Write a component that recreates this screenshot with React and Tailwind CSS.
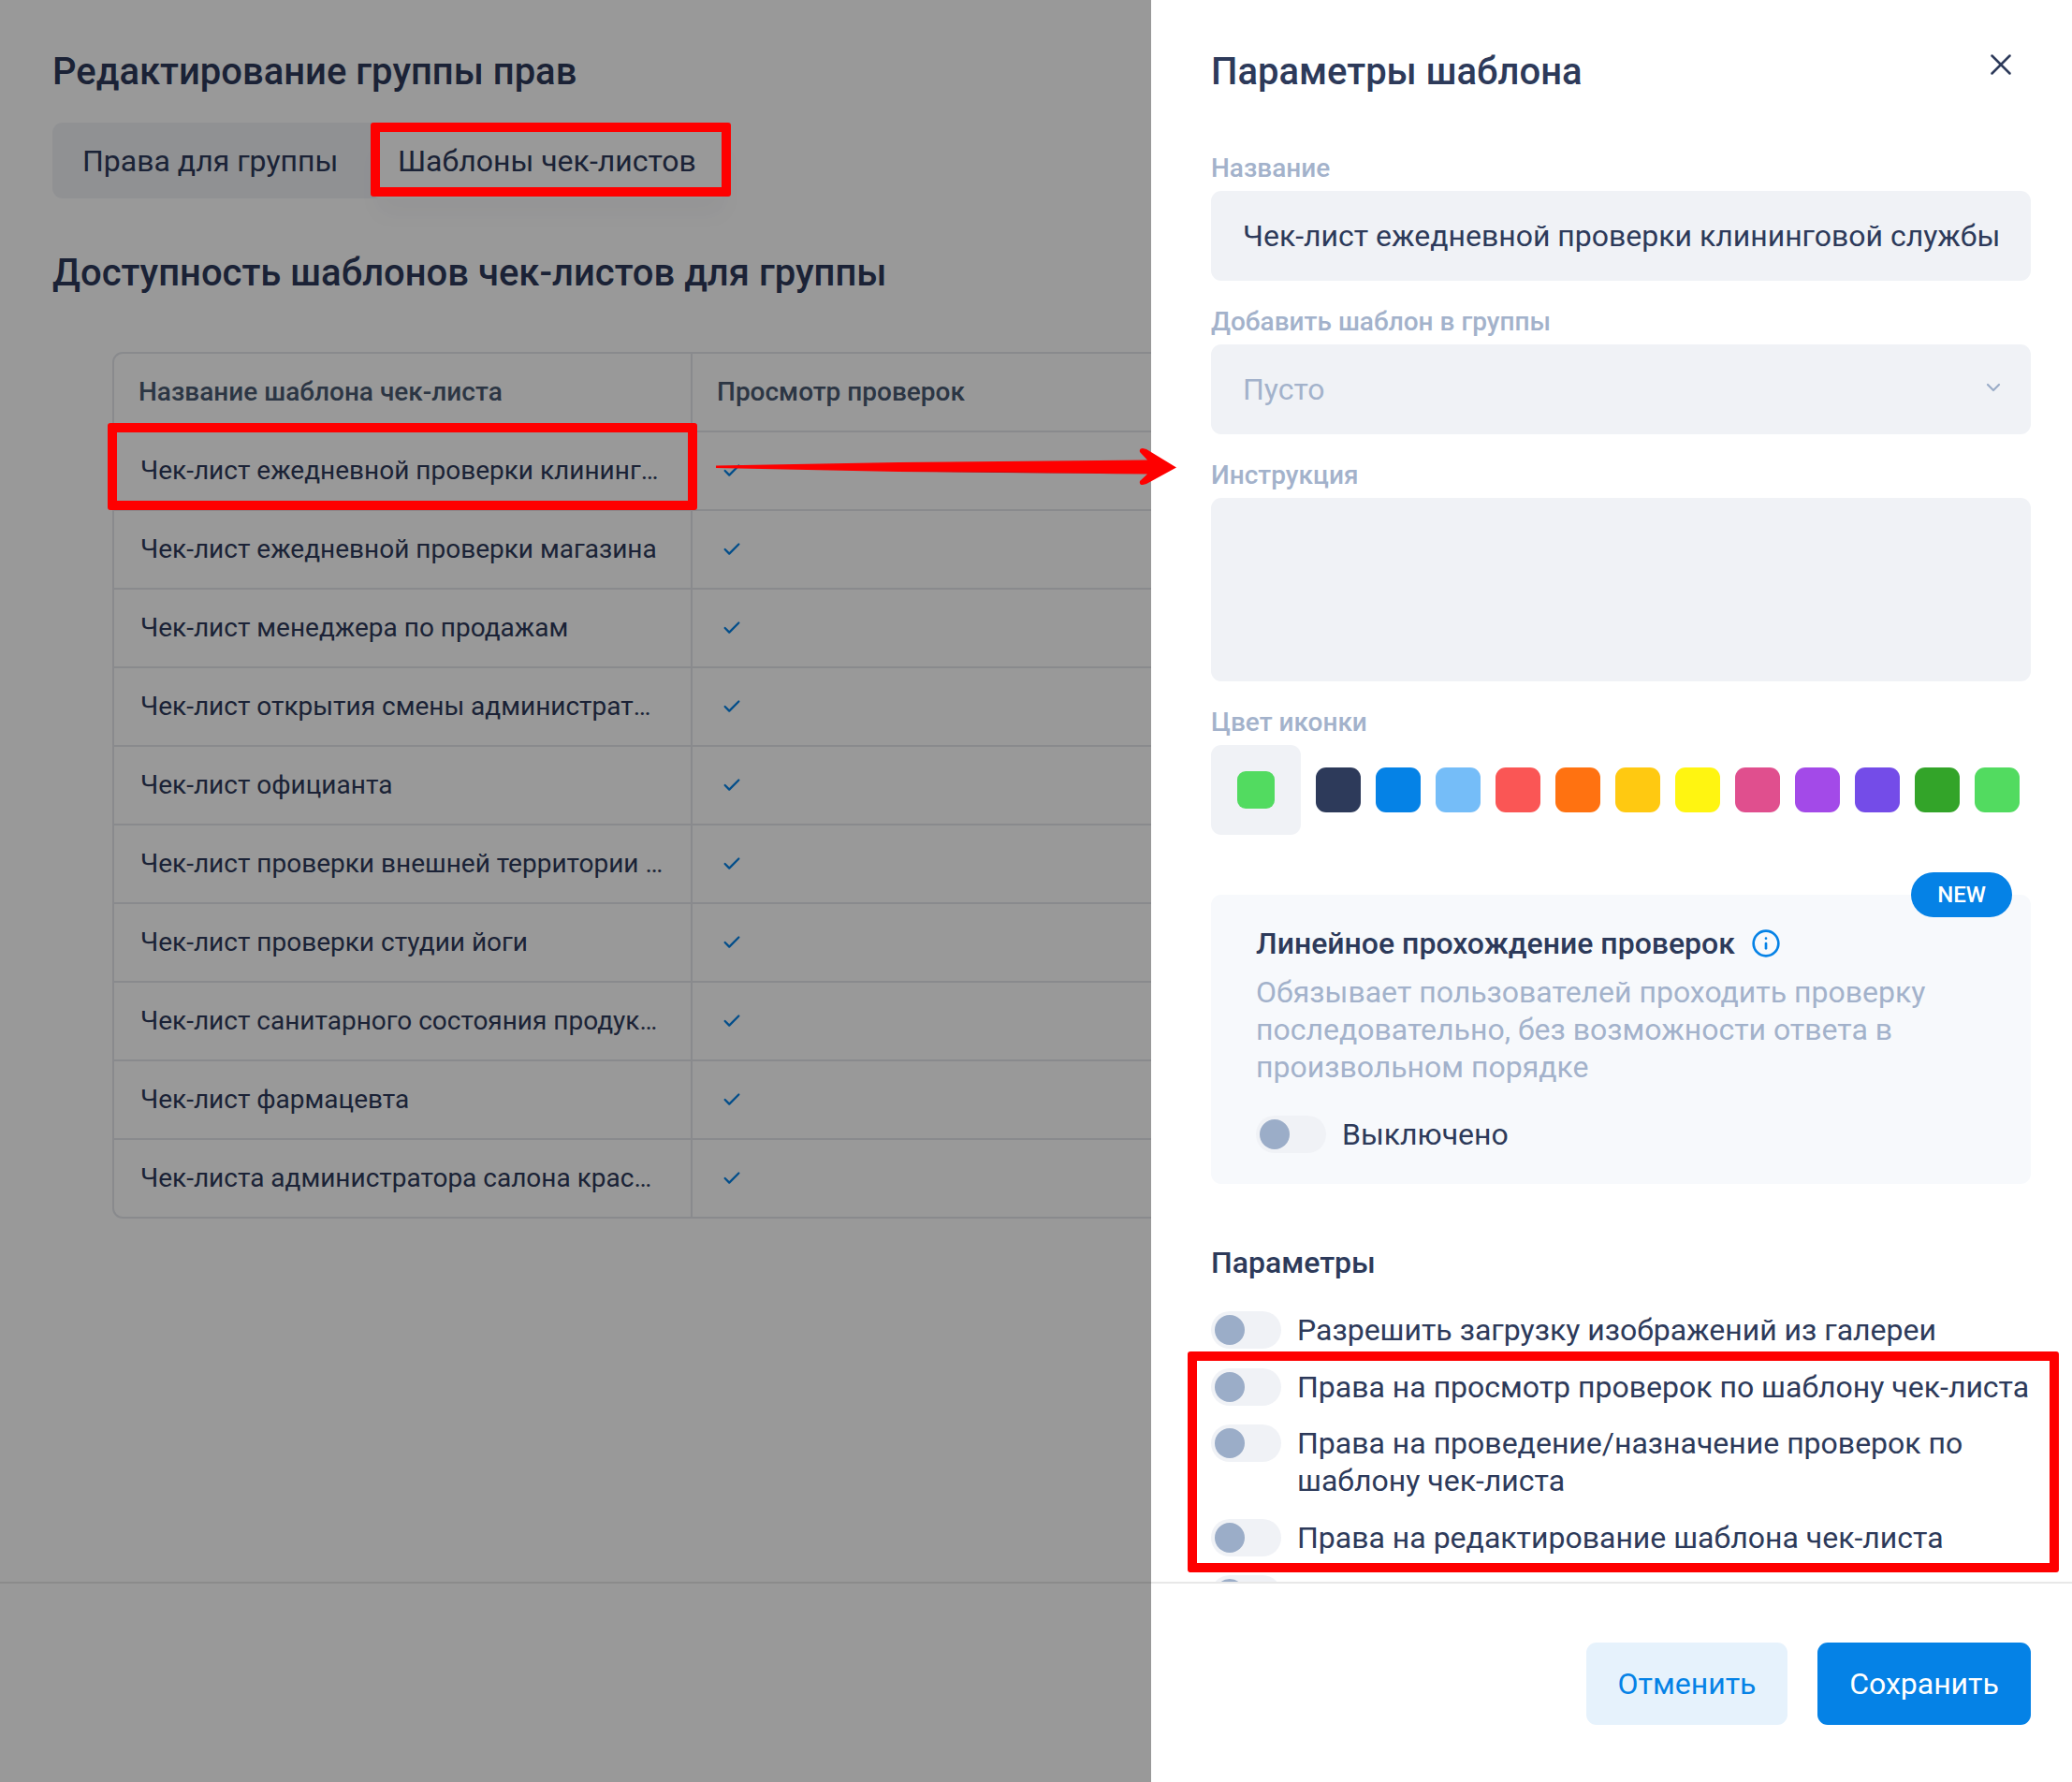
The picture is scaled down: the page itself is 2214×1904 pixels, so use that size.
import { X, ChevronDown, Check, Info } from 'lucide-react'

const rows = [
  'Чек-лист ежедневной проверки клининг…',
  'Чек-лист ежедневной проверки магазина',
  'Чек-лист менеджера по продажам',
  'Чек-лист открытия смены администрат…',
  'Чек-лист официанта',
  'Чек-лист проверки внешней территории …',
  'Чек-лист проверки студии йоги',
  'Чек-лист санитарного состояния продук…',
  'Чек-лист фармацевта',
  'Чек-листа администратора салона крас…',
]

const swatches = [
  'bg-[#2d3a5a]',
  'bg-[#0582e6]',
  'bg-[#75bdf8]',
  'bg-[#fa5655]',
  'bg-[#ff7211]',
  'bg-[#ffc911]',
  'bg-[#fff511]',
  'bg-[#e04f8e]',
  'bg-[#a34ae8]',
  'bg-[#744ce8]',
  'bg-[#33a429]',
  'bg-[#52db60]',
]

const params = [
  'Разрешить загрузку изображений из галереи',
  'Права на просмотр проверок по шаблону чек-листа',
  'Права на проведение/назначение проверок по шаблону чек-листа',
  'Права на редактирование шаблона чек-листа',
  '',
]

function Toggle() {
  return (
    <div className="w-[75px] h-10 shrink-0 rounded-full bg-[#f0f2f6] flex items-center pl-1">
      <div className="w-8 h-8 rounded-full bg-[#9badc8]" />
    </div>
  )
}

function Label({ children }) {
  return <div className="text-[28px] leading-8 font-medium text-[#a3b2cb] mb-2">{children}</div>
}

function LeftPage() {
  return (
    <div className="relative w-[1230px] shrink-0 h-full overflow-hidden bg-white flex flex-col">
      <div className="flex-1 pl-14 pt-[49px]">
        <h1 className="text-[40px] leading-14 font-medium text-[#2d3a5a]">Редактирование группы прав</h1>
        <div className="mt-[26px] flex w-fit h-[81px] rounded-[11px] bg-[#f0f2f6]">
          <div className="w-[340px] pl-[32px] flex items-center text-[32px] text-[#2d3a5a]">Права для группы</div>
          <div className="w-[385px] pl-[29px] flex items-center text-[32px] text-[#2d3a5a] rounded-[11px] bg-white shadow-[0_24px_24px_-8px_rgba(45,58,90,0.04)]">
            Шаблоны чек-листов
          </div>
        </div>
        <h2 className="mt-[52px] text-[40px] leading-14 font-medium text-[#2d3a5a]">Доступность шаблонов чек-листов для группы</h2>
        <div className="mt-[56px] ml-16 w-[1400px] rounded-[11px] border-2 border-[#e4e7ec]">
          <div className="flex h-[82px] items-center text-[28px] font-medium text-[#4a5a72]">
            <div className="w-[618px] h-full pl-[26px] flex items-center border-r-2 border-[#e4e7ec]">Название шаблона чек-листа</div>
            <div className="pl-[26px]">Просмотр проверок</div>
          </div>
          {rows.map(r => (
            <div key={r} className="flex h-[84px] items-center border-t-2 border-[#e4e7ec] text-[28px] text-[#2d3a5a]">
              <div className="w-[618px] h-full pl-[28px] flex items-center border-r-2 border-[#e4e7ec] whitespace-nowrap overflow-hidden">{r}</div>
              <div className="pl-[31px]">
                <Check className="w-[22px] h-[22px] text-[#0582e6]" strokeWidth={2.5} />
              </div>
            </div>
          ))}
        </div>
      </div>
      <div className="h-[214px] shrink-0 border-t-2 border-[#e8e8e8]" />
      <div className="absolute inset-0 bg-black/40" />
    </div>
  )
}

function RightPanel() {
  return (
    <div className="flex-1 h-full bg-white flex flex-col">
      <div className="flex-1 min-h-0 overflow-hidden pl-[64px] pr-[44px] pt-[49px]">
        <div className="flex justify-between">
          <h2 className="text-[40px] leading-14 font-medium text-[#2d3a5a]">Параметры шаблона</h2>
          <X className="w-[38px] h-[38px] mt-[1px] mr-[13px] text-[#2d3a5a]" strokeWidth={1.6} />
        </div>

        <div className="mt-[59px]">
          <Label>Название</Label>
          <div className="h-24 rounded-[11px] bg-[#f0f2f6] pl-[34px] flex items-center text-[32px] text-[#2d3a5a] whitespace-nowrap">
            Чек-лист ежедневной проверки клининговой службы
          </div>
        </div>

        <div className="mt-[28px]">
          <Label>Добавить шаблон в группы</Label>
          <div className="h-24 rounded-[11px] bg-[#f0f2f6] pl-[34px] pr-[28px] flex items-center justify-between text-[32px] text-[#a3b2cb]">
            Пусто
            <ChevronDown className="w-[24px] h-[24px] -mt-1 text-[#9badc8]" strokeWidth={2.2} />
          </div>
        </div>

        <div className="mt-[28px]">
          <Label>Инструкция</Label>
          <div className="h-[196px] rounded-[11px] bg-[#f0f2f6]" />
        </div>

        <div className="mt-[28px]">
          <Label>Цвет иконки</Label>
          <div className="flex items-center gap-4">
            <div className="w-24 h-24 rounded-[11px] bg-[#f0f2f6] flex items-center justify-center">
              <div className="w-10 h-10 rounded-[9px] bg-[#52db60]" />
            </div>
            {swatches.map(c => (
              <div key={c} className={`w-12 h-12 rounded-[11px] ${c}`} />
            ))}
          </div>
        </div>

        <div className="relative mt-16 rounded-[11px] bg-[#f7f9fc] pl-[48px] pr-8 pt-[32px] pb-[29px]">
          <div className="absolute -top-6 right-5 w-[108px] h-12 rounded-full bg-[#0582e6] flex items-center justify-center text-[24px] font-medium text-white">
            NEW
          </div>
          <div className="flex items-center gap-[17px] h-10">
            <span className="text-[32px] font-medium text-[#2d3a5a]">Линейное прохождение проверок</span>
            <Info className="w-[32px] h-[32px] text-[#0582e6]" strokeWidth={2} />
          </div>
          <p className="mt-3 text-[32px] leading-10 text-[#a3b2cb]">
            Обязывает пользователей проходить проверку последовательно, без возможности ответа в произвольном порядке
          </p>
          <div className="mt-[28px] flex items-center gap-[17px]">
            <Toggle />
            <span className="text-[32px] text-[#2d3a5a]">Выключено</span>
          </div>
        </div>

        <div className="mt-16 text-[32px] leading-10 font-medium text-[#2d3a5a]">Параметры</div>
        <div className="mt-[32px] flex flex-col gap-[20.5px]">
          {params.map((p, i) => (
            <div key={i} className="flex items-start gap-[17px] text-[32px] leading-10 text-[#2d3a5a]">
              <Toggle />
              <span>{p}</span>
            </div>
          ))}
        </div>
      </div>

      <div className="h-[214px] shrink-0 border-t-2 border-[#e8e8e8] pl-[65px] pr-[44px] pt-[63px] flex justify-end gap-8">
        <button className="w-[215px] h-[88px] rounded-[11px] bg-[#e6f2fc] text-[32px] text-[#0582e6]">Отменить</button>
        <button className="w-[228px] h-[88px] rounded-[11px] bg-[#0582e6] text-[32px] text-white">Сохранить</button>
      </div>
    </div>
  )
}

export default function App() {
  return (
    <div className="relative w-[2214px] h-[1904px] overflow-hidden flex font-['Roboto',sans-serif]">
      <LeftPage />
      <RightPanel />

      {/* annotations */}
      <div className="absolute left-[396px] top-[131px] w-[385px] h-[79px] rounded-[3px] border-[10px] border-[#fe0000]" />
      <div className="absolute left-[115px] top-[452px] w-[630px] h-[93px] rounded-[3px] border-[10px] border-[#fe0000]" />
      <div className="absolute left-[1269px] top-[1444px] w-[931px] h-[236px] rounded-[3px] border-[10px] border-[#fe0000]" />
      <svg className="absolute left-[760px] top-[470px]" width="500" height="60" viewBox="0 0 500 60">
        <path d="M5 27.5 L200 24 L466 21.5 L458 13 Q457 9 461 9 L465 10 L497 29.5 L465 47 L461 48 Q457 48 458 44 L466 36.5 L200 34 L5 30 Z" fill="#fe0000" />
        <path d="M200 33.5 L464 36.5 L300 34 Z" fill="#7a1020" opacity="0.5" />
      </svg>
    </div>
  )
}
